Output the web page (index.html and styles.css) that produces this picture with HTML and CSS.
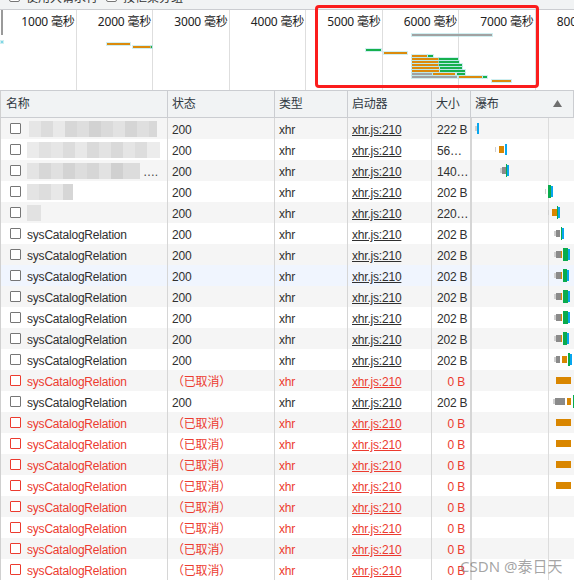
FILE: index.html
```html
<!DOCTYPE html>
<html lang="zh">
<head>
<meta charset="utf-8">
<title>Network</title>
<link rel="stylesheet" href="styles.css">
</head>
<body>
<div class="page">
  <div class="toolbar">
    <div class="tb-inner"><span class="tcb"></span><span class="tlabel">使用大请求行</span><span class="tcb"></span><span class="tlabel">按框架分组</span></div>
  </div>
  <div class="overview">
    <div class="ticks">
      <div class="tick"><span>1000 毫秒</span></div>
      <div class="tick"><span>2000 毫秒</span></div>
      <div class="tick"><span>3000 毫秒</span></div>
      <div class="tick"><span>4000 毫秒</span></div>
      <div class="tick"><span>5000 毫秒</span></div>
      <div class="tick"><span>6000 毫秒</span></div>
      <div class="tick"><span>7000 毫秒</span></div>
      <div class="tick"><span>8000 毫秒</span></div>
    </div>
    <div class="handle"></div>
    <span class="ob oc" style="left:1px;top:31px;width:2px"></span>
    <span class="ob oo" style="left:107px;top:33px;width:23px"></span>
    <span class="ob oo" style="left:133px;top:36px;width:18px"></span>
    <span class="ob og" style="left:151px;top:36px;width:1px"></span>
    <span class="ob os" style="left:412px;top:24px;width:80px"></span>
    <span class="ob og" style="left:366px;top:39px;width:15px"></span>
    <span class="ob oo" style="left:384px;top:42px;width:23px"></span>
    <span class="ob oo" style="left:412px;top:45px;width:15px"></span>
    <span class="ob og" style="left:428px;top:45px;width:5px"></span>
    <span class="ob oo" style="left:412px;top:48px;width:27px"></span>
    <span class="ob og" style="left:439px;top:48px;width:19px"></span>
    <span class="ob oo" style="left:412px;top:51px;width:27px"></span>
    <span class="ob og" style="left:439px;top:51px;width:20px"></span>
    <span class="ob oo" style="left:412px;top:54px;width:27px"></span>
    <span class="ob og" style="left:439px;top:54px;width:23px"></span>
    <span class="ob oo" style="left:412px;top:57px;width:27px"></span>
    <span class="ob og" style="left:440px;top:57px;width:22px"></span>
    <span class="ob oo" style="left:412px;top:60px;width:27px"></span>
    <span class="ob og" style="left:440px;top:60px;width:25px"></span>
    <span class="ob os" style="left:412px;top:63px;width:20px"></span>
    <span class="ob oo" style="left:433px;top:63px;width:22px"></span>
    <span class="ob og" style="left:457px;top:63px;width:8px"></span>
    <span class="ob os" style="left:412px;top:66px;width:45px"></span>
    <span class="ob oo" style="left:459px;top:66px;width:23px"></span>
    <span class="ob og" style="left:483px;top:66px;width:4px"></span>
    <span class="ob oo" style="left:492px;top:70px;width:19px"></span>
  </div>
  <div class="highlight"></div>

  <div class="grid">
    <div class="row head">
      <div class="c">名称</div>
      <div class="c">状态</div>
      <div class="c">类型</div>
      <div class="c">启动器</div>
      <div class="c">大小</div>
      <div class="c wfh"><span>瀑布</span><svg class="sort" width="9" height="7" viewBox="0 0 9 7"><path d="M4.5 0 L9 7 L0 7 Z" fill="#6f6f6f"/></svg></div>
    </div>

    <div class="row odd">
      <div class="c name"><span class="cb"></span><span class="mz m0"></span></div>
      <div class="c">200</div><div class="c">xhr</div><div class="c"><span class="link">xhr.js:210</span></div><div class="c size">222 B</div>
      <div class="c wf"><span class="b q" style="left:4px;width:2px"></span><span class="b bl" style="left:6px;width:2px"></span></div>
    </div>
    <div class="row">
      <div class="c name"><span class="cb"></span><span class="mz m1"></span></div>
      <div class="c">200</div><div class="c">xhr</div><div class="c"><span class="link">xhr.js:210</span></div><div class="c size trunc">56…</div>
      <div class="c wf"><span class="b q" style="left:24px;width:1px"></span><span class="b o" style="left:28px;width:5px"></span><span class="b bl" style="left:34px;width:2px"></span></div>
    </div>
    <div class="row odd">
      <div class="c name"><span class="cb"></span><span class="mz m2"></span><span class="dots">….</span></div>
      <div class="c">200</div><div class="c">xhr</div><div class="c"><span class="link">xhr.js:210</span></div><div class="c size trunc">140…</div>
      <div class="c wf"><span class="b q" style="left:29px;width:2px"></span><span class="b s" style="left:31px;width:4px"></span><span class="b g" style="left:35px;width:1px"></span><span class="b bl" style="left:36px;width:2px"></span></div>
    </div>
    <div class="row">
      <div class="c name"><span class="cb"></span><span class="mz m3"></span></div>
      <div class="c">200</div><div class="c">xhr</div><div class="c"><span class="link">xhr.js:210</span></div><div class="c size">202 B</div>
      <div class="c wf"><span class="b q" style="left:74px;width:1px"></span><span class="b g" style="left:77px;width:3px"></span><span class="b bl" style="left:80px;width:2px"></span></div>
    </div>
    <div class="row odd">
      <div class="c name"><span class="cb"></span><span class="mz m4"></span></div>
      <div class="c">200</div><div class="c">xhr</div><div class="c"><span class="link">xhr.js:210</span></div><div class="c size trunc">220…</div>
      <div class="c wf"><span class="b q" style="left:77px;width:1px"></span><span class="b o" style="left:81px;width:5px"></span><span class="b g" style="left:86px;width:1px"></span><span class="b bl" style="left:87px;width:2px"></span></div>
    </div>
    <div class="row">
      <div class="c name"><span class="cb"></span><span>sysCatalogRelation</span></div>
      <div class="c">200</div><div class="c">xhr</div><div class="c"><span class="link">xhr.js:210</span></div><div class="c size">202 B</div>
      <div class="c wf"><span class="b q" style="left:83px;width:2px"></span><span class="b s" style="left:85px;width:4px"></span><span class="b g" style="left:90px;width:1px"></span><span class="b bl" style="left:91px;width:2px"></span></div>
    </div>
    <div class="row odd">
      <div class="c name"><span class="cb"></span><span>sysCatalogRelation</span></div>
      <div class="c">200</div><div class="c">xhr</div><div class="c"><span class="link">xhr.js:210</span></div><div class="c size">202 B</div>
      <div class="c wf"><span class="b q" style="left:83px;width:2px"></span><span class="b s" style="left:85px;width:5px"></span><span class="b o" style="left:90px;width:1px"></span><span class="b g" style="left:92px;width:5px"></span><span class="b bl" style="left:97px;width:2px"></span></div>
    </div>
    <div class="row hover">
      <div class="c name"><span class="cb"></span><span>sysCatalogRelation</span></div>
      <div class="c">200</div><div class="c">xhr</div><div class="c"><span class="link">xhr.js:210</span></div><div class="c size">202 B</div>
      <div class="c wf"><span class="b q" style="left:83px;width:2px"></span><span class="b s" style="left:85px;width:5px"></span><span class="b o" style="left:90px;width:1px"></span><span class="b g" style="left:92px;width:4px"></span><span class="b bl" style="left:96px;width:2px"></span></div>
    </div>
    <div class="row odd">
      <div class="c name"><span class="cb"></span><span>sysCatalogRelation</span></div>
      <div class="c">200</div><div class="c">xhr</div><div class="c"><span class="link">xhr.js:210</span></div><div class="c size">202 B</div>
      <div class="c wf"><span class="b q" style="left:83px;width:2px"></span><span class="b s" style="left:85px;width:5px"></span><span class="b o" style="left:90px;width:1px"></span><span class="b g" style="left:92px;width:5px"></span><span class="b bl" style="left:97px;width:2px"></span></div>
    </div>
    <div class="row">
      <div class="c name"><span class="cb"></span><span>sysCatalogRelation</span></div>
      <div class="c">200</div><div class="c">xhr</div><div class="c"><span class="link">xhr.js:210</span></div><div class="c size">202 B</div>
      <div class="c wf"><span class="b q" style="left:83px;width:2px"></span><span class="b s" style="left:85px;width:5px"></span><span class="b o" style="left:90px;width:1px"></span><span class="b g" style="left:92px;width:5px"></span><span class="b bl" style="left:97px;width:2px"></span></div>
    </div>
    <div class="row odd">
      <div class="c name"><span class="cb"></span><span>sysCatalogRelation</span></div>
      <div class="c">200</div><div class="c">xhr</div><div class="c"><span class="link">xhr.js:210</span></div><div class="c size">202 B</div>
      <div class="c wf"><span class="b q" style="left:83px;width:2px"></span><span class="b s" style="left:85px;width:5px"></span><span class="b o" style="left:90px;width:1px"></span><span class="b g" style="left:92px;width:4px"></span><span class="b bl" style="left:96px;width:2px"></span></div>
    </div>
    <div class="row">
      <div class="c name"><span class="cb"></span><span>sysCatalogRelation</span></div>
      <div class="c">200</div><div class="c">xhr</div><div class="c"><span class="link">xhr.js:210</span></div><div class="c size">202 B</div>
      <div class="c wf"><span class="b q" style="left:83px;width:2px"></span><span class="b s" style="left:85px;width:4px"></span><span class="b o" style="left:91px;width:5px"></span><span class="b g" style="left:97px;width:2px"></span><span class="b bl" style="left:99px;width:2px"></span></div>
    </div>
    <div class="row odd err">
      <div class="c name"><span class="cb"></span><span>sysCatalogRelation</span></div>
      <div class="c">（已取消）</div><div class="c">xhr</div><div class="c"><span class="link">xhr.js:210</span></div><div class="c size">0 B</div>
      <div class="c wf"><span class="b o" style="left:85px;width:15px"></span></div>
    </div>
    <div class="row">
      <div class="c name"><span class="cb"></span><span>sysCatalogRelation</span></div>
      <div class="c">200</div><div class="c">xhr</div><div class="c"><span class="link">xhr.js:210</span></div><div class="c size">202 B</div>
      <div class="c wf"><span class="b q" style="left:82px;width:2px"></span><span class="b s" style="left:84px;width:10px"></span><span class="b o" style="left:96px;width:4px"></span><span class="b g" style="left:102px;width:1px"></span></div>
    </div>
    <div class="row odd err">
      <div class="c name"><span class="cb"></span><span>sysCatalogRelation</span></div>
      <div class="c">（已取消）</div><div class="c">xhr</div><div class="c"><span class="link">xhr.js:210</span></div><div class="c size">0 B</div>
      <div class="c wf"><span class="b o" style="left:85px;width:15px"></span></div>
    </div>
    <div class="row err">
      <div class="c name"><span class="cb"></span><span>sysCatalogRelation</span></div>
      <div class="c">（已取消）</div><div class="c">xhr</div><div class="c"><span class="link">xhr.js:210</span></div><div class="c size">0 B</div>
      <div class="c wf"><span class="b o" style="left:85px;width:15px"></span></div>
    </div>
    <div class="row odd err">
      <div class="c name"><span class="cb"></span><span>sysCatalogRelation</span></div>
      <div class="c">（已取消）</div><div class="c">xhr</div><div class="c"><span class="link">xhr.js:210</span></div><div class="c size">0 B</div>
      <div class="c wf"><span class="b o" style="left:85px;width:15px"></span></div>
    </div>
    <div class="row err">
      <div class="c name"><span class="cb"></span><span>sysCatalogRelation</span></div>
      <div class="c">（已取消）</div><div class="c">xhr</div><div class="c"><span class="link">xhr.js:210</span></div><div class="c size">0 B</div>
      <div class="c wf"><span class="b o" style="left:85px;width:15px"></span></div>
    </div>
    <div class="row odd err">
      <div class="c name"><span class="cb"></span><span>sysCatalogRelation</span></div>
      <div class="c">（已取消）</div><div class="c">xhr</div><div class="c"><span class="link">xhr.js:210</span></div><div class="c size">0 B</div>
      <div class="c wf"></div>
    </div>
    <div class="row err">
      <div class="c name"><span class="cb"></span><span>sysCatalogRelation</span></div>
      <div class="c">（已取消）</div><div class="c">xhr</div><div class="c"><span class="link">xhr.js:210</span></div><div class="c size">0 B</div>
      <div class="c wf"></div>
    </div>
    <div class="row odd err">
      <div class="c name"><span class="cb"></span><span>sysCatalogRelation</span></div>
      <div class="c">（已取消）</div><div class="c">xhr</div><div class="c"><span class="link">xhr.js:210</span></div><div class="c size">0 B</div>
      <div class="c wf"></div>
    </div>
    <div class="row err">
      <div class="c name"><span class="cb"></span><span>sysCatalogRelation</span></div>
      <div class="c">（已取消）</div><div class="c">xhr</div><div class="c"><span class="link">xhr.js:210</span></div><div class="c size">0 B</div>
      <div class="c wf"></div>
    </div>
  </div>
  <div class="watermark">CSDN @泰日天</div>
</div>
</body>
</html>
```

FILE: styles.css
```css
* { box-sizing: border-box; }
html, body { margin: 0; padding: 0; background: #fff; }
body {
  font-family: "Liberation Sans", "Noto Sans CJK SC", sans-serif;
  font-size: 12px;
  color: #303030;
  width: 574px;
  height: 582px;
  overflow: hidden;
}
.page { position: relative; width: 574px; height: 582px; overflow: hidden; }

/* toolbar (mostly scrolled out of view) */
.toolbar {
  height: 10px;
  background: #f1f3f4;
  border-bottom: 1px solid #cbcdd1;
  overflow: hidden;
}
.tb-inner {
  display: flex;
  align-items: center;
  height: 16px;
  margin-top: -12px;
  padding-left: 9px;
  color: #333;
  white-space: nowrap;
}
.tcb {
  width: 11px; height: 11px;
  border: 1px solid #767676;
  border-radius: 2px;
  background: #fff;
  margin-right: 6px;
}
.tlabel { margin-right: 8px; }

/* overview */
.overview {
  position: relative;
  height: 81px;
  background: #fff;
  border-bottom: 1px solid #cbcdd1;
}
.ticks { display: flex; height: 80px; }
.tick {
  flex: 0 0 76.5px;
  border-right: 1px solid #dedede;
  text-align: right;
  padding: 4px 1px 0 0;
  line-height: 16px;
  white-space: nowrap;
  color: #222;
  font-family: "Noto Sans", "Noto Sans CJK SC", sans-serif;
  font-size: 12px;
  letter-spacing: -0.2px;
}
.handle {
  position: absolute; left: 1px; top: 0; width: 2px; height: 25px;
  background: #9a9a9a;
}
.ob { position: absolute; height: 2px; box-shadow: 0 0 0 1px rgba(170, 225, 230, 0.55); }
.oo { background: #dc8a0c; }
.og { background: #16b04e; }
.os { background: #a2a2a2; }
.oc { background: #7fd6e6; }

.highlight {
  position: absolute;
  left: 315px; top: 5px;
  width: 224px; height: 83px;
  border: 3px solid #fb1d1d;
  border-radius: 4px;
}

/* grid */
.grid { display: flex; flex-direction: column; }
.row {
  display: grid;
  grid-template-columns: 168px 107px 73px 84px 39px 103px;
  height: 21px;
  background: #fff;
}
.row.odd { background: #f5f5f5; }
.row.hover { background: #f0f5fe; }
.c {
  border-right: 1px solid #d6d6d6;
  padding-left: 4px;
  padding-top: 3px;
  line-height: 18px;
  white-space: nowrap;
  overflow: hidden;
  letter-spacing: -0.2px;
}
.row .c:first-child { border-left: 1px solid #d0d0d0; }
.row.head {
  height: 27px;
  background: #f1f3f4;
  border-bottom: 1px solid #cbcdd1;
}
.row.head .c {
  line-height: 25px;
  padding-top: 1px;
  border-right-color: #cbcdd1;
  color: #303942;
}
.row.head .c:first-child { padding-left: 5px; }
.wfh { display: flex; align-items: center; justify-content: space-between; padding-right: 11px; }
.sort { display: block; margin-top: -2px; }

.name { display: flex; align-items: center; padding-left: 9px; padding-top: 0; }
.cb {
  flex: 0 0 auto;
  width: 11px; height: 11px;
  border: 1px solid #767676;
  border-radius: 1px;
  background: #fff;
  margin-right: 6px;
}
.name > span:not(.cb):not(.mz) { padding-top: 3px; }
.link { text-decoration: underline; }
.size { text-align: right; padding-right: 5px; padding-left: 5px; }
.size.trunc { text-align: left; }

.err { color: #ec3b2f; }
.err .cb { border-color: #ec3b2f; }

/* mosaic (blurred names) */
.mz { display: block; height: 16px; flex: 0 0 auto; }
.m0 {
  width: 128px; margin-left: 2px;
  background: linear-gradient(90deg, #e6e6e6 0 12px, #dcdcdc 12px 24px, #e9e9e9 24px 36px, #d7d7d7 36px 48px, #dedede 48px 60px, #d2d2d2 60px 72px, #dadada 72px 84px, #e2e2e2 84px 96px, #d5d5d5 96px 108px, #dfdfdf 108px 120px, #d8d8d8 120px);
}
.m1 {
  width: 133px;
  background: linear-gradient(90deg, #ebebeb 0 12px, #e1e1e1 12px 24px, #e6e6e6 24px 36px, #dcdcdc 36px 48px, #e8e8e8 48px 60px, #dadada 60px 72px, #e3e3e3 72px 84px, #d9d9d9 84px 96px, #e5e5e5 96px 108px, #dddddd 108px 120px, #ececec 120px);
}
.m2 {
  width: 113px;
  background: linear-gradient(90deg, #e4e4e4 0 12px, #d7d7d7 12px 24px, #e0e0e0 24px 36px, #d3d3d3 36px 48px, #dddddd 48px 60px, #d6d6d6 60px 72px, #e2e2e2 72px 84px, #d0d0d0 84px 96px, #dcdcdc 96px);
}
.dots { margin-left: 3px; color: #444; }
.m3 {
  width: 46px;
  background: linear-gradient(90deg, #e4e4e4 0 12px, #dddddd 12px 24px, #e8e8e8 24px 36px, #d6d6d6 36px);
}
.m4 {
  width: 14px;
  background: #e2e2e2;
}

/* waterfall */
.wf {
  position: relative;
  padding: 0;
  box-shadow: inset 1px 0 0 #d6d6d6;
  background-image: linear-gradient(90deg, transparent 77px, #dcdcdc 77px, #dcdcdc 78px, transparent 78px);
  border-right: 0;
}
.b { position: absolute; }
.q { top: 8px; height: 5px; background: #cfcfcf; }
.s { top: 7px; height: 7px; background: #8a8a8a; }
.o { top: 7px; height: 7px; background: #d98600; }
.g { top: 4px; height: 13px; background: #0aab4d; }
.bl { top: 5px; height: 11px; background: #07a6ee; }

.watermark {
  position: absolute;
  left: 460px; top: 556px;
  font-family: "Noto Sans", "Noto Sans CJK SC", sans-serif;
  font-size: 15px;
  line-height: 20px;
  color: rgba(105, 105, 105, 0.6);
  white-space: nowrap;
}
```
